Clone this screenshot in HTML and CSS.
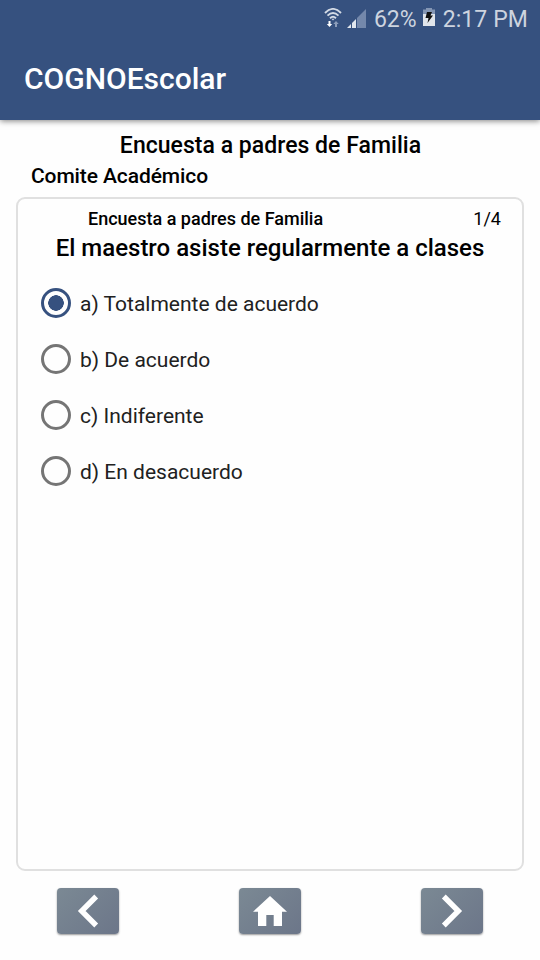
FILE: index.html
```html
<!DOCTYPE html>
<html lang="es">
<head>
    <meta charset="UTF-8">
    <meta name="viewport" content="width=device-width, initial-scale=1.0">
    <title>COGNOEscolar</title>
    <link rel="stylesheet" href="styles.css">
</head>
<body>
    <div class="screen">
        <header class="header">
            <div class="status-bar">
                <svg class="wifi" width="18" height="20" viewBox="0 0 18 20">
                    <g fill="none" stroke="#d3dae5" stroke-width="1.900">
                        <path d="M1 5Q9 -3.200 17 5"/>
                        <path d="M3.500 7.700Q9 2.200 14.500 7.700"/>
                        <path d="M6 10.200Q9 7.400 12 10.200"/>
                    </g>
                    <path fill="#d3dae5" d="M7.500 10.800h3L9 12.400z"/>
                    <path fill="#fff" d="M4.500 13h2v3h1.700l-2.700 3-2.700-3h1.700z"/>
                    <path fill="#8c9dba" d="M11 19v-3H9.300l2.700-3 2.700 3H13v3z"/>
                </svg>
                <svg class="signal" width="19" height="19" viewBox="0 0 19 19">
                    <path fill="#7488ab" d="M19 0v19H10V9z"/>
                    <path fill="#e1e6ed" d="M0 19l4-4v4zM5 14l4-4v9H5z"/>
                </svg>
                <span class="percent">62%</span>
                <svg class="battery" width="12" height="18" viewBox="0 0 12 18">
                    <path fill="#8496b4" d="M3 0h6v1.500h3V7H0V1.500h3z"/>
                    <path fill="#e1e5eb" d="M0 6h12v12H0z"/>
                    <path fill="#111" d="M4 4h5L7.500 7.500H10L4.500 15l1-5H2.500z"/>
                </svg>
                <span class="clock">2:17 PM</span>
            </div>
            <h1 class="app-title">COGNOEscolar</h1>
        </header>

        <main class="content">
            <h2 class="survey-title">Encuesta a padres de Familia</h2>
            <p class="survey-group">Comite Académico</p>

            <section class="card">
                <div class="card-top">
                    <span class="card-name">Encuesta a padres de Familia</span>
                    <span class="card-count">1/4</span>
                </div>
                <h3 class="question">El maestro asiste regularmente a clases</h3>

                <div class="options">
                    <label class="option"><input type="radio" name="answer" checked><span>a) Totalmente de acuerdo</span></label>
                    <label class="option"><input type="radio" name="answer"><span>b) De acuerdo</span></label>
                    <label class="option"><input type="radio" name="answer"><span>c) Indiferente</span></label>
                    <label class="option"><input type="radio" name="answer"><span>d) En desacuerdo</span></label>
                </div>
            </section>
        </main>

        <nav class="nav">
            <button class="nav-button" aria-label="Anterior">
                <svg width="62" height="46" viewBox="0 0 62 46"><path fill="none" stroke="#fff" stroke-width="5.400" d="M39.200 8.500L24.700 23l14.500 14.500"/></svg>
            </button>
            <button class="nav-button" aria-label="Inicio">
                <svg width="62" height="46" viewBox="0 0 62 46"><path fill="#fff" d="M31 8l17 15.700h-5V38h-8.300V27h-7.400v11H19V23.700h-5z"/></svg>
            </button>
            <button class="nav-button" aria-label="Siguiente">
                <svg width="62" height="46" viewBox="0 0 62 46"><path fill="none" stroke="#fff" stroke-width="5.400" d="M22.800 8.500L37.300 23 22.800 37.500"/></svg>
            </button>
        </nav>
    </div>
</body>
</html>
```

FILE: styles.css
```css
body {
    margin: 0;
    font-family: Roboto, "Liberation Sans", sans-serif;
    background-color: #fefefe;
    color: #000;
}

h1, h2, h3, p {
    margin: 0;
    font-weight: 500;
}

.screen {
    display: flex;
    flex-direction: column;
    height: 960px;
}

.header {
    height: 120px;
    background-color: #36517f;
    box-shadow: 0 1px 6px rgba(0, 0, 0, 0.5);
}

.status-bar {
    display: flex;
    justify-content: flex-end;
    align-items: center;
    height: 38px;
    padding-right: 12px;
    color: #cdd4df;
    font-size: 23px;
}

.wifi {
    margin: 0 5px 2px 0;
}

.signal {
    margin: 0 8px 2px 0;
}

.battery {
    margin: 0 8px 4px 6px;
}

.clock {
    letter-spacing: 0.1px;
}

.app-title {
    padding-left: 24px;
    color: #fff;
    font-size: 30px;
    line-height: 82px;
}

.content {
    display: flex;
    flex-direction: column;
    flex: 1;
    padding: 11px 16px 0;
}

.survey-title {
    padding-left: 1px;
    font-size: 23px;
    line-height: 30px;
    letter-spacing: 0.03px;
    text-align: center;
}

.survey-group {
    padding-left: 15px;
    font-size: 21px;
    line-height: 30px;
    letter-spacing: -0.1px;
}

.card {
    flex: 1;
    margin-top: 6px;
    border: 2px solid #e0e0e0;
    border-radius: 9px;
}

.card-top {
    display: flex;
    justify-content: space-between;
    padding: 6px 21px 0 70px;
    font-size: 18px;
    line-height: 27px;
}

.card-name {
    font-weight: 500;
}

.question {
    font-size: 24px;
    line-height: 32px;
    text-align: center;
}

.options {
    padding: 11px 0 0 23px;
}

.option {
    display: flex;
    align-items: center;
    gap: 9px;
    height: 56px;
    color: #212121;
    font-size: 21px;
}

.option span {
    padding-top: 2px;
}

.option input {
    appearance: none;
    width: 30px;
    height: 30px;
    margin: 0;
    border: 3px solid #757575;
    border-radius: 50%;
}

.option input:checked {
    border-color: #36517f;
    background: radial-gradient(circle, #36517f 7.5px, transparent 8px);
}

.nav {
    display: flex;
    justify-content: space-between;
    align-items: flex-start;
    height: 72px;
    margin-top: 17px;
    padding: 0 57px;
}

.nav-button {
    width: 62px;
    height: 46px;
    padding: 0;
    border: none;
    border-radius: 4px;
    background: linear-gradient(135deg, #7b8994, #6c7689);
    box-shadow: 0 1px 2px rgba(0, 0, 0, 0.4);
}

.nav-button svg {
    display: block;
}
```
